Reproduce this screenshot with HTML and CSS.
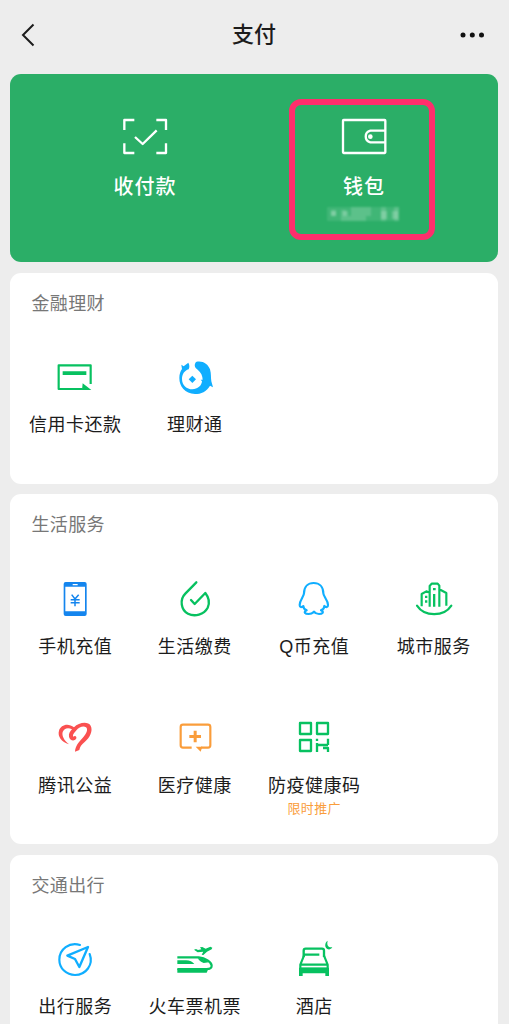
FILE: index.html
```html
<!DOCTYPE html>
<html lang="zh-CN">
<head>
<meta charset="utf-8">
<meta name="viewport" content="width=device-width, initial-scale=1">
<title>支付</title>
<link rel="stylesheet" href="styles.css">
</head>
<body>
<header class="nav">
  <svg class="nav-back" viewBox="0 0 24 24"><path d="M17.500 1.500 7 12 17.500 22.500"/></svg>
  <h1 class="nav-title">支付</h1>
  <svg class="nav-more" viewBox="0 0 26 8"><circle cx="3" cy="4" r="2.500"/><circle cx="12.300" cy="4" r="2.500"/><circle cx="21.500" cy="4" r="2.500"/></svg>
</header>
<main class="page">
  <section class="hero">
    <div class="hero-item">
      <svg class="icon white" viewBox="360 336 150 150"><g class="line w7"><path d="M373 390V360H403M469 360H498V390M373 430V459H403M469 459H498V430M405 411 428 432 470 391"/></g></svg>
      <span class="hero-label">收付款</span>
    </div>
    <div class="hero-item">
      <svg class="icon white" viewBox="1016 336 150 150"><g class="line w7"><rect x="1028" y="360" width="127" height="99" rx="2"/><path d="M1155 392H1110A18 18 0 0 0 1110 427H1155"/></g><circle class="solid" cx="1110" cy="410" r="7"/></svg>
      <span class="hero-label">钱包</span>
      <svg class="mosaic" viewBox="0 0 76 16"><g class="m1"><path d="M2 1h72v14H2z"/></g><g class="m2"><path d="M6 4h5v6H6zM16 4h5v11h-5zM26 1h20v9H26zM21 10h20v5H21zM56 1h5v14h-5zM69 1h5v14h-5z"/></g><g class="m3"><path d="M6 5h5v5H6zM18 5h5v5h-5zM56 5h6v8h-6zM67 5h6v8h-6z"/></g></svg>
      <div class="highlight"></div>
    </div>
  </section>

  <section class="card card-finance">
    <h2 class="card-title">金融理财</h2>
    <div class="grid">
      <div class="item">
        <svg class="icon green" viewBox="91 9 150 150"><path class="line w6" d="M189 117H117V46H213V102"/><path class="solid" d="M129 64H200V75H129zM189 100 215 120H187z"/></svg>
        <span class="label">信用卡还款</span>
      </div>
      <div class="item">
        <svg class="icon sky" viewBox="449 9 150 150"><path class="solid" d="M483 44 490 49 504 38C508 45 508 52 505 58C492 62 485 73 485 87C485 106 499 118 516 118C532 118 544 107 545 94L541 89L547 89C547 77 542 67 532 59C522 53 521 43 527 36C546 31 563 42 569 58C573 71 571 82 573 94L578 112 569 107C559 125 542 132 524 132C494 131 477 110 477 84C477 73 480 64 485 57Z"/><path class="solid" d="m516 77 11 11-11 11-11-11z"/></svg>
        <span class="label">理财通</span>
      </div>
    </div>
  </section>

  <section class="card card-life">
    <h2 class="card-title">生活服务</h2>
    <div class="grid">
      <div class="item">
        <svg class="icon blue" viewBox="61 12 150 150"><path class="solid" fill-rule="evenodd" d="M108 36H165Q171 36 171 42V132Q171 138 165 138H108Q102 138 102 132V42Q102 36 108 36ZM107 50V124H166V50ZM129 42V46H144V42Z"/><path class="line w5" d="M126 74 136 87 147 74M136 87V109M123 89H150M123 98H150"/></svg>
        <span class="label">手机充值</span>
      </div>
      <div class="item">
        <svg class="icon green" viewBox="419 12 150 150"><path class="line w7 round" d="M498 37 465 71C447 89 452 120 473 131C493 141 521 134 532 113C538 100 536 83 525 69L493 102 482 90"/></svg>
        <span class="label">生活缴费</span>
      </div>
      <div class="item">
        <svg class="icon sky" viewBox="58 12 150 150"><path class="line w6 round" d="M103 70C103 50 115 39 132 39S161 50 161 70C161 79 175 90 175 105C175 112 170 113 164 108C164 114 159 119 154 121C165 126 158 132 148 132C141 132 136 129 133 125C129 129 124 132 117 132C106 132 100 126 111 121C106 119 101 114 101 108C95 113 90 112 90 105C90 90 103 79 103 70Z"/></svg>
        <span class="label">Q币充值</span>
      </div>
      <div class="item">
        <svg class="icon green" viewBox="416 12 150 150"><path class="line w6" d="M454 109V72L468 64 479 69M478 110V48L484 41H502L507 47V110M507 58 528 69V107"/><path class="line w6 round" d="M440 107C462 141 521 141 543 107"/><path class="solid" d="M488 54h8v7h-8zM464 77h7v7h-7zM464 91h7v7h-7zM488 72h7v38h-7z"/></svg>
        <span class="label">城市服务</span>
      </div>
      <div class="item">
        <svg class="icon red" viewBox="61 9 150 150"><path class="solid" d="M118 103C95 95 83 79 88 62C93 44 116 38 133 52C147 37 175 33 183 47C191 63 180 83 165 96C155 105 151 110 149 120L136 125C137 108 147 97 158 85C171 71 176 58 169 52C161 47 149 51 139 62C131 70 128 76 131 80C137 74 143 81 139 87C133 95 120 91 118 80C116 71 122 63 127 58C115 51 103 55 99 66C96 77 103 91 118 103Z"/></svg>
        <span class="label">腾讯公益</span>
      </div>
      <div class="item">
        <svg class="icon orange" viewBox="419 9 150 150"><path class="line w6" d="M484 113H458Q451 113 451 106V51Q451 44 458 44H533Q540 44 540 51V106Q540 113 533 113H512"/><path class="solid" d="M490 62h9v13h13v9h-13v13h-9V84h-13v-9h13zM496 110H516L511 125Z"/></svg>
        <span class="label">医疗健康</span>
      </div>
      <div class="item">
        <svg class="icon green" viewBox="88 9 150 150"><path class="line w7" d="M121 39H154V72H121zM172 39H205V72H172zM121 90H154V123H121zM172 86V93M172 99V126M172 105H205M205 86V105M190 114H205V126"/></svg>
        <span class="label">防疫健康码</span>
        <span class="promo">限时推广</span>
      </div>
    </div>
  </section>

  <section class="card card-travel">
    <h2 class="card-title">交通出行</h2>
    <div class="grid">
      <div class="item">
        <svg class="icon sky" viewBox="61 12 150 150"><path class="line w6 round" d="M151 42C119 32 89 55 89 86C89 112 110 132 136 132C169 132 192 101 180 69"/><path class="line w7" d="M175 48 113 74 136 84 149 108Z"/></svg>
        <span class="label">出行服务</span>
      </div>
      <div class="item">
        <svg class="icon green" viewBox="419 12 150 150"><path class="line w6" d="M441 79H505C525 81 544 93 544 104C544 112 537 114 529 114H441"/><path class="solid" d="M441 88H467Q484 89 492 99H441zM502 82C517 82 530 88 536 94L520 96C510 93 507 88 502 82zM441 114H534L529 125H441zM491 56 497 54 503 57 513 55 509 49 516 48 526 53 540 47 546 50 544 55 530 62 519 72 514 71 519 62 502 64Z"/></svg>
        <span class="label">火车票机票</span>
      </div>
      <div class="item">
        <svg class="icon green" viewBox="58 12 150 150"><path class="line w7" d="M102 78V59Q102 53 108 53H157Q163 53 163 59V78"/><path class="line w6" d="M103 74 92 101V113H174V101L163 74M103 71H149M94 101H172"/><path class="solid" d="M88 110H178V135H167V127H99V135H88zM174 29C165 34 164 49 173 54C178 57 184 55 188 49C174 50 171 41 174 29Z"/></svg>
        <span class="label">酒店</span>
      </div>
    </div>
  </section>
</main>
</body>
</html>
```
FILE: styles.css
```css
* { box-sizing: border-box; }
body {
  margin: 0;
  height: 1024px;
  overflow: hidden;
  background: #ededed;
  color: #1c1c1c;
  font-family: "Liberation Sans", "Noto Sans CJK SC", sans-serif;
}
.nav {
  display: grid;
  grid-template-columns: 1fr auto 1fr;
  align-items: center;
  height: 74px;
  padding: 0 23px 4px 22px;
}
.nav-back { width: 24px; height: 24px; margin-left: -6px; fill: none; stroke: #1c1c1c; stroke-width: 2; }
.nav-more { width: 26px; height: 8px; justify-self: end; fill: #111; }
.nav-title { margin: 0; font-size: 22px; line-height: 30px; font-weight: 500; }
.page { display: flex; flex-direction: column; gap: 10.500px; padding: 0 10.600px 0 10.400px; }
.hero {
  display: grid;
  grid-template-columns: 219px 219px;
  justify-content: center;
  height: 188px;
  padding-top: 38px;
  border-radius: 11px;
  background: #2bae67;
  color: #fff;
}
.hero-item { position: relative; display: flex; flex-direction: column; align-items: center; }
.hero-label { margin-top: 10px; font-size: 20px; line-height: 30px; font-weight: 500; letter-spacing: 1px; }
.mosaic { width: 76px; height: 16px; margin: 4px 2px 0 0; filter: blur(0.800px); fill: #fff; }
.m1 { opacity: 0.100; }
.m2 { opacity: 0.150; }
.m3 { opacity: 0.220; }
.highlight {
  position: absolute;
  top: -13px;
  left: 35px;
  width: 146px;
  height: 141px;
  border: 6.500px solid #ff2e6c;
  border-radius: 12px;
}
.card { flex: none; border-radius: 11px; background: #fff; }
.card-finance { height: 211px; }
.card-life { height: 350px; }
.card-travel { height: 211px; }
.card-title {
  margin: 0;
  padding: 0 21px;
  height: 80px;
  font-size: 18px;
  line-height: 63px;
  font-weight: 400;
  letter-spacing: 0.400px;
  color: #777;
}
.grid {
  display: grid;
  grid-template-columns: repeat(4, 1fr);
  grid-auto-rows: 139px;
  padding: 0 5px;
}
.item { display: flex; flex-direction: column; align-items: center; }
.icon { display: block; flex: none; width: 50px; height: 50px; }
.label { margin-top: 9.500px; font-size: 18px; line-height: 26px; letter-spacing: 0.500px; white-space: nowrap; }
.promo { margin-top: 1.500px; font-size: 13px; line-height: 18px; letter-spacing: 0.300px; color: #fa9d3b; }
.line { fill: none; stroke: currentColor; stroke-linejoin: round; }
.solid { fill: currentColor; }
.round { stroke-linecap: round; }
.w5 { stroke-width: 4.500; }
.w6 { stroke-width: 6.500; }
.w7 { stroke-width: 7; }
.white { color: #fff; }
.green { color: #07c160; }
.sky { color: #10aeff; }
.blue { color: #1485ee; }
.red { color: #fa5151; }
.orange { color: #fa9d3b; }
```
